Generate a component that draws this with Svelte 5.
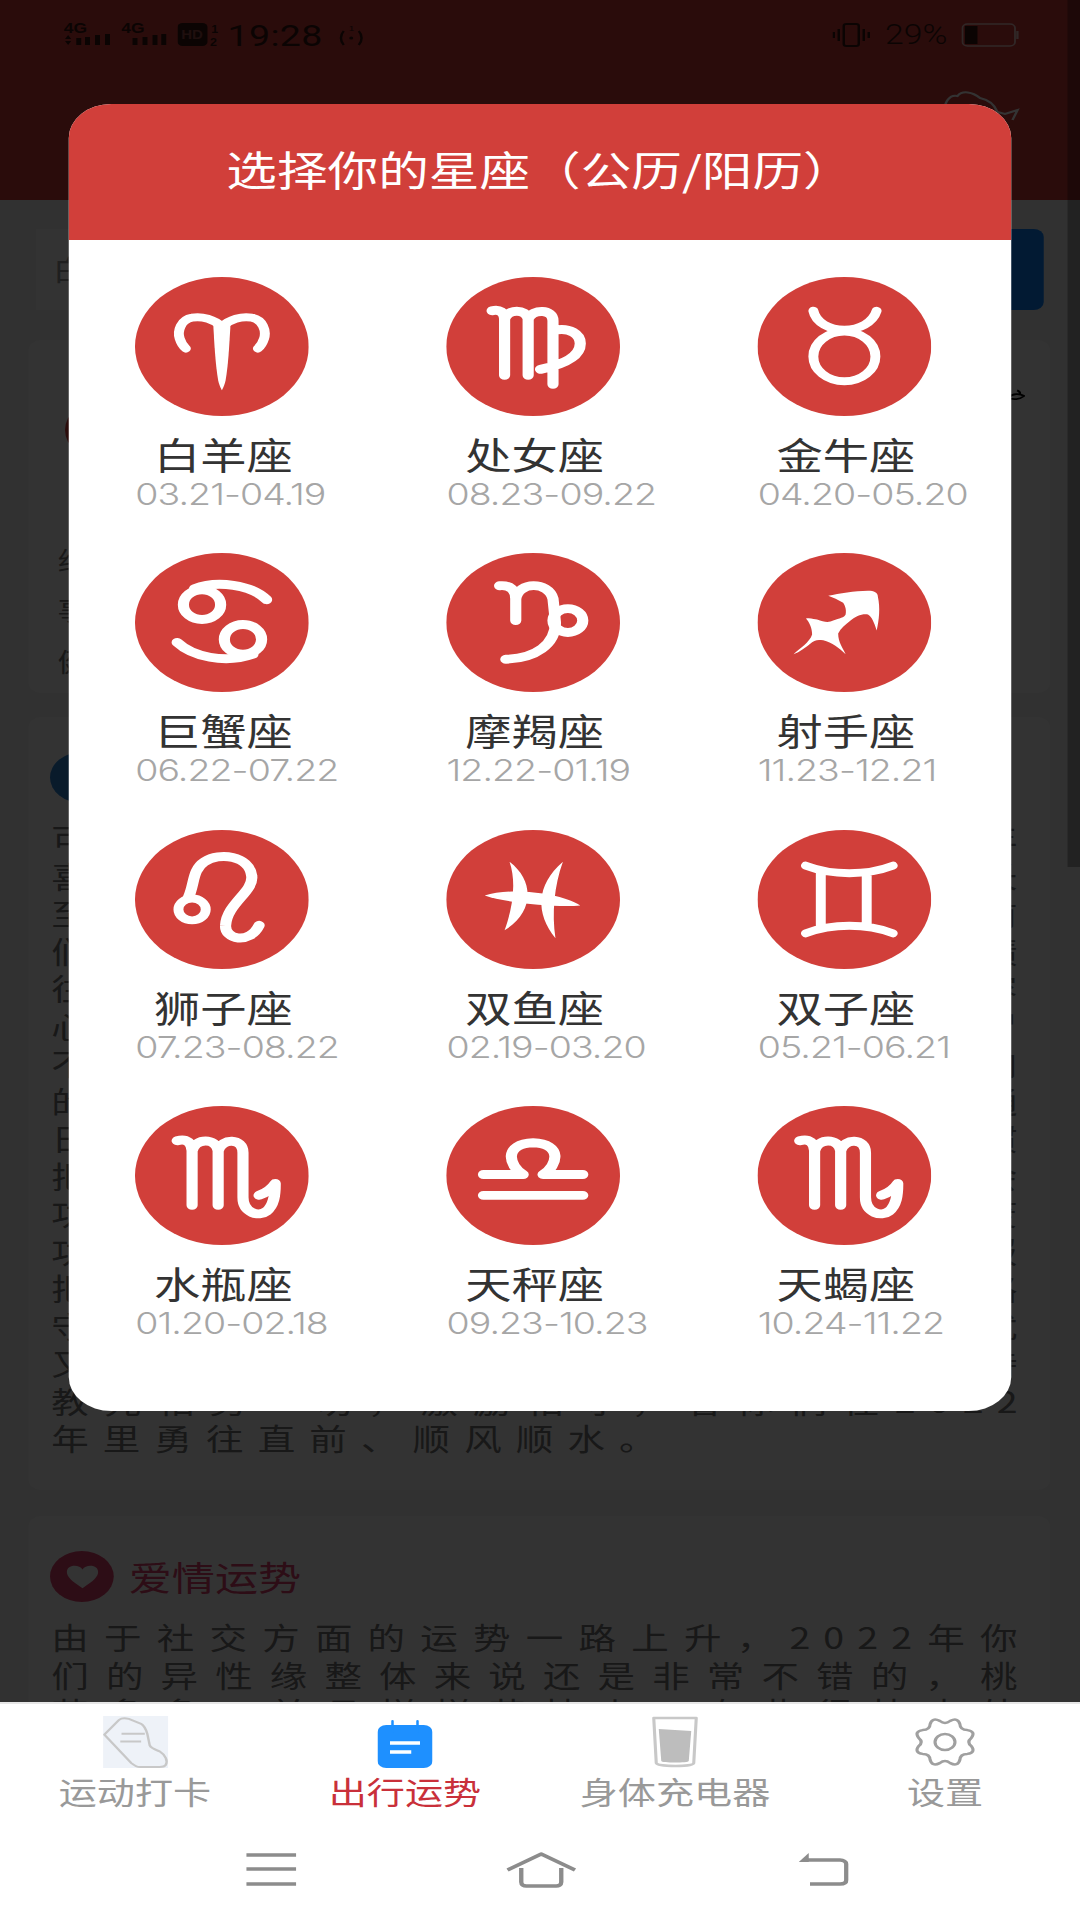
<script>
  const signs = [
    { name: '白羊座', date: '03.21-04.19', key: 'aries' },
    { name: '处女座', date: '08.23-09.22', key: 'virgo' },
    { name: '金牛座', date: '04.20-05.20', key: 'taurus' },
    { name: '巨蟹座', date: '06.22-07.22', key: 'cancer' },
    { name: '摩羯座', date: '12.22-01.19', key: 'capricorn' },
    { name: '射手座', date: '11.23-12.21', key: 'sagittarius' },
    { name: '狮子座', date: '07.23-08.22', key: 'leo' },
    { name: '双鱼座', date: '02.19-03.20', key: 'pisces' },
    { name: '双子座', date: '05.21-06.21', key: 'gemini' },
    { name: '水瓶座', date: '01.20-02.18', key: 'scorpio' },
    { name: '天秤座', date: '09.23-10.23', key: 'libra' },
    { name: '天蝎座', date: '10.24-11.22', key: 'scorpio' }
  ];

  const fortune = [
    '可以说这一年对白羊座是充满希望的一年',
    '喜事连连，各方面都会有不错的收获成长',
    '至于事业方面，也会有新的机会出现眼前',
    '们只要把握时机，就能获得理想中的成绩',
    '往后的日子也会因此变得更加顺利和从容',
    '心态方面需要多加调整，不要过于急躁冒',
    '不妨放慢脚步，认真思考未来的发展方向',
    '的想法也要及时与身边的朋友和家人沟通',
    '日常生活里保持良好的作息和运动的习惯',
    '把握好每一次学习与提升自己的宝贵机会',
    '功课和工作都要踏实认真，切勿半途而废',
    '功到自然成，付出的努力终究会得到回报',
    '把精力放在真正重要的事情上，少走弯路',
    '守住自己的初心，不被外界的声音所干扰',
    '又能在人际交往中获得贵人的帮助和支持',
    '教先相势一切，激励相守，着你们在2022'
  ];

  function gearPath() {
    const cx = 25, cy = 26, n = 8, step = Math.PI / n;
    const pt = (a, r) => (cx + Math.cos(a) * r).toFixed(1) + ' ' + (cy + Math.sin(a) * r).toFixed(1);
    let d = '';
    for (let i = 0; i < n; i++) {
      const a = (i / n) * Math.PI * 2 + step;
      if (i === 0) d += 'M' + pt(a - step / 2, 21.5) + ' ';
      d += 'Q' + pt(a, 27) + ' ' + pt(a + step / 2, 21.5) + ' ';
      d += 'Q' + pt(a + step, 17) + ' ' + pt(a + step * 1.5, 21.5) + ' ';
    }
    return d + 'Z';
  }
  const gear = gearPath();
</script>

<div class="stage">
  <div class="page">
    <header class="top">
      <div class="status">
        <svg class="sig" viewBox="0 -4 38 32" aria-hidden="true">
          <text x="0" y="10" class="sig-t">4G</text>
          <path d="M1 16L3.5 12L6 16ZM1 18L3.5 22L6 18Z" />
          <rect x="10" y="15" width="4" height="7" /><rect x="17" y="14" width="4" height="8" /><rect x="25" y="12" width="4" height="10" /><rect x="33" y="11" width="4" height="11" />
        </svg>
        <svg class="sig sig2" viewBox="0 -4 38 32" aria-hidden="true">
          <text x="0" y="10" class="sig-t">4G</text>
          <rect x="9" y="15" width="4" height="7" /><rect x="17" y="14" width="4" height="8" /><rect x="25" y="12" width="4" height="10" /><rect x="32" y="11" width="4" height="11" />
        </svg>
        <svg class="hd" viewBox="0 0 33 24" aria-hidden="true">
          <rect x="0" y="0" width="24" height="23" rx="4" />
          <text x="3" y="16" class="hd-t">HD</text>
          <text x="27" y="10" class="hd-n">1</text>
          <text x="26" y="23" class="hd-n">2</text>
        </svg>
        <span class="time">19:28</span>
        <svg class="wifi" viewBox="0 0 24 24" aria-hidden="true">
          <circle cx="12" cy="15" r="1.6" />
          <text x="10" y="8" class="wifi-n">1</text>
          <path d="M6 8C3 12 3 18 6 22M18 8C21 12 21 18 18 22" />
        </svg>
        <span class="grow"></span>
        <svg class="vib" viewBox="0 0 30 24" aria-hidden="true">
          <rect x="9" y="1" width="12" height="22" rx="2" />
          <path d="M5 6v12M25 6v12M1 9v6M29 9v6" />
        </svg>
        <span class="pct">29%</span>
        <svg class="batt" viewBox="0 0 46 24" aria-hidden="true">
          <rect class="b-o" x="1" y="1" width="42" height="22" rx="4" />
          <rect class="b-f" x="3" y="3" width="10" height="18" />
          <rect class="b-o2" x="44" y="8" width="2" height="8" />
        </svg>
      </div>
      <svg class="pig" viewBox="0 0 62 40" aria-hidden="true">
        <path d="M2 22C1 12 6 4 12 6C16 0 24 2 30 8C38 10 42 16 44 22L50 24L60 20L56 30" />
      </svg>
    </header>

    <div class="search">
      <div class="search-field">白羊座</div>
      <div class="search-btn"></div>
    </div>

    <section class="card c1">
      <div class="c1-head">
        <span class="c1-dot"></span>
        <svg class="c1-link" viewBox="0 0 20 18" aria-hidden="true"><path d="M1 11C6 5 14 5 19 9C14 14 6 15 1 11ZM14 7C15 4 13 2 11 1" /></svg>
      </div>
      <p class="c1-l a">综合指数：五颗星</p>
      <p class="c1-l b">事业指数：四颗星</p>
      <p class="c1-l c">健康指数：三颗星</p>
    </section>

    <section class="card c2">
      <div class="ct"><span class="ci blue"></span><span class="ctt blue-t">整体运势</span></div>
      {#each fortune as line}
        <p class="line">{line}</p>
      {/each}
      <p class="line last">年里勇往直前、顺风顺水。</p>
    </section>

    <section class="card c3">
      <div class="ct">
        <span class="ci pink">
          <svg viewBox="0 0 24 24" aria-hidden="true"><path d="M12 21C5 15 2 12 2 8C2 5 4 3 7 3C9 3 11 4 12 6C13 4 15 3 17 3C20 3 22 5 22 8C22 12 19 15 12 21Z" /></svg>
        </span>
        <span class="ctt pink-t">爱情运势</span>
      </div>
      <p class="line">由于社交方面的运势一路上升，2022年你</p>
      <p class="line">们的异性缘整体来说还是非常不错的，桃</p>
      <p class="line">花多多，并且样样花枝上，有些很快内外</p>
    </section>

    <div class="scrollbar"></div>
    <div class="overlay"></div>

    <div class="modal">
      <div class="modal-head">选择你的星座（公历/阳历）</div>
      <div class="grid">
        {#each signs as s}
          <div class="sign">
            <svg class="zod" viewBox="0 0 140 140" aria-hidden="true">
              <circle class="disc" cx="70" cy="70" r="70" />
              {#if s.key === 'aries'}
                <path class="g w8" d="M70 50C64 43 54 39 46 41C37 43 34 54 36 62C37 66 39 70 41 72" />
                <path class="g w8" d="M70 50C76 43 86 39 94 41C103 43 106 54 104 62C103 66 101 70 99 72" />
                <path class="f" d="M63 46L77 46C76 70 75 90 73 104C72 110 70 114 70 114C70 114 68 110 67 104C65 90 64 70 63 46Z" />
              {:else if s.key === 'virgo'}
                <path class="g" d="M37 34C43 32 47 36 47 42L47 99M47 42C50 32 64 32 66 42L66 99M66 42C70 32 86 32 86 44L86 108M86 54C100 50 108 58 108 67C108 80 95 88 76 93" />
              {:else if s.key === 'taurus'}
                <circle class="g w8" cx="70" cy="80" r="25" />
                <path class="g w8" d="M45 34C47 46 58 53 70 53C82 53 93 46 96 34" />
              {:else if s.key === 'cancer'}
                <circle class="g" cx="54" cy="52" r="15" />
                <circle class="g" cx="87" cy="87" r="15" />
                <path class="g" d="M48 36C66 27 94 32 106 47" />
                <path class="g" d="M34 90C46 104 72 112 95 102" />
              {:else if s.key === 'capricorn'}
                <path class="g" d="M43 33C52 32 56 38 56 46L56 68M56 46C58 29 82 28 86 46L88 70C88 92 72 106 48 107" />
                <circle class="g" cx="98" cy="68" r="12" />
              {:else if s.key === 'sagittarius'}
                <path class="f" d="M57 43C66 41 78 38 89 38C94 38 97 40 97 44C99 55 98 68 96 78C94 70 92 64 89 62C84 61 79 64 75 68C71 72 67 76 65 81C65 90 69 96 71 102C66 96 60 90 53 88C48 87 46 88 44 90C39 95 34 100 29 102C34 96 42 90 44 82C44 76 42 70 39 66C43 65 46 67 48 67C54 70 58 70 61 68C66 66 70 65 71 62C72 56 70 52 69 50C65 47 61 45 57 43Z" />
              {:else if s.key === 'leo'}
                <circle class="g w8" cx="46" cy="80" r="11" />
                <path class="g" d="M43 68C48 55 46 40 56 32C68 22 92 26 94 46C96 62 74 74 73 96C72 110 92 116 100 96" />
              {:else if s.key === 'pisces'}
                <path class="f" d="M51 32C72 52 70 84 47 101C53 80 57 54 51 32Z" />
                <path class="f" d="M94 32C72 56 72 84 88 109C85 84 87 56 94 32Z" />
                <path class="f" d="M31 66C50 58 90 62 108 76C90 78 50 74 31 66Z" />
              {:else if s.key === 'gemini'}
                <path class="g w8" d="M39 36C60 46 88 46 109 36M39 104C60 94 88 94 109 104M51 43L51 97M88 43L88 97" />
              {:else if s.key === 'scorpio'}
                <path class="g" d="M34 35C42 32 46 38 46 45L46 100M46 45C49 32 65 32 67 45L67 100M67 45C70 32 87 32 87 47L87 92C87 108 100 112 106 106C112 100 113 90 113 78C110 84 104 88 100 90" />
              {:else if s.key === 'libra'}
                <path class="g" d="M30 69L62 69C50 60 46 38 70 37C94 38 90 60 78 69L110 69M30 90L110 90" />
              {/if}
            </svg>
            <div class="sign-name">{s.name}</div>
            <div class="sign-date">{s.date}</div>
          </div>
        {/each}
      </div>
    </div>
  </div>

  <nav class="tabs">
    <div class="tab">
      <svg class="ic shoe" viewBox="0 0 53 53" aria-hidden="true">
        <rect class="shoe-bg" width="53" height="53" />
        <path class="shoe-l" d="M1 19L13 4C15 2 18 2 21 3L31 8C34 10 35 14 36 18L38 30C39 33 42 34 46 36C51 40 53 46 51 50C50 52 48 52 46 52L30 52C27 52 25 50 23 48Z" />
        <path class="shoe-l" d="M15 18L34 18M14 26L31 26" />
      </svg>
      <span class="lbl">运动打卡</span>
    </div>
    <div class="tab on">
      <svg class="ic cal" viewBox="0 0 44 52" aria-hidden="true">
        <rect class="cal-b" x="0" y="9" width="44" height="43" rx="7" />
        <path class="cal-r" d="M12 5L12 16M32 5L32 16" />
        <path class="cal-l" d="M10 27L34 27M10 36L27 36" />
      </svg>
      <span class="lbl">出行运势</span>
    </div>
    <div class="tab">
      <svg class="ic cup" viewBox="0 0 38 52" aria-hidden="true">
        <path class="cup-f" d="M6 13L32 15L30 45C30 47 8 47 8 45Z" />
        <path class="cup-o" d="M2 2L36 2L34 47C34 51 5 51 4 47Z" />
      </svg>
      <span class="lbl">身体充电器</span>
    </div>
    <div class="tab">
      <svg class="ic gear" viewBox="0 0 50 52" aria-hidden="true">
        <path class="gear-p" d={gear} />
        <circle class="gear-p" cx="25" cy="26" r="8" />
      </svg>
      <span class="lbl">设置</span>
    </div>
  </nav>

  <div class="nav">
    <svg class="n-menu" viewBox="0 0 40 34" aria-hidden="true"><path d="M0 3L40 3M0 17L40 17M0 32L40 32" /></svg>
    <svg class="n-home" viewBox="0 0 56 36" aria-hidden="true"><path d="M1 18L28 2L55 18M12 16L12 30C12 33 14 34 16 34L40 34C42 34 44 33 44 30L44 16" /></svg>
    <svg class="n-back" viewBox="0 0 40 36" aria-hidden="true">
      <path d="M6 8L33 8C36 8 38 10 38 12L38 28C38 31 36 32 33 32L9 32" />
      <path class="n-arrow" d="M0 10L8 1L8 10Z" />
    </svg>
  </div>
</div>

<style>
  :global(body) {
    margin: 0;
    background: #fff;
  }
  :global(html), :global(body) {
    overflow: hidden;
  }
  .stage {
    width: 864px;
    height: 1920px;
    display: flex;
    flex-direction: column;
    transform: scaleX(1.25);
    transform-origin: 0 0;
    font-family: "Noto Sans CJK SC", "Liberation Sans", sans-serif;
    overflow: hidden;
    background: #fff;
  }
  .page {
    position: relative;
    height: 1702px;
    flex: none;
    overflow: hidden;
    background: #f5f5f5;
  }
  .overlay {
    position: absolute;
    inset: 0;
    background: rgba(0, 0, 0, 0.8);
  }
  .scrollbar {
    position: absolute;
    top: 0;
    right: 0;
    width: 10px;
    height: 867px;
    background: rgba(0, 0, 0, 0.3);
  }
  .top {
    height: 200px;
    background: #d13f3a;
    position: relative;
  }
  .status {
    height: 70px;
    padding: 0 49px 0 51px;
    display: flex;
    align-items: center;
    color: #3a1512;
  }
  .status svg { fill: #3a1512; flex: none; }
  .sig { width: 38px; height: 32px; }
  .sig2 { margin-left: 8px; }
  .sig-t { font: 700 14px "Liberation Sans", sans-serif; }
  .hd { width: 33px; height: 24px; margin-left: 7px; }
  .hd-t { font: 700 12px "Liberation Sans", sans-serif; fill: #9a4a46; }
  .hd-n { font: 700 10px "Liberation Sans", sans-serif; }
  .time {
    font: 400 30px Roboto, sans-serif;
    margin-left: 7px;
    letter-spacing: 0.3px;
  }
  .wifi { width: 24px; height: 24px; margin-left: 11px; }
  .wifi-n { font: 400 8px "Liberation Sans", sans-serif; }
  .wifi path, .vib path { fill: none; stroke: #3a1512; stroke-width: 2; }
  .vib rect { fill: none; stroke: #3a1512; stroke-width: 2; }
  .grow { flex: 1; }
  .vib { width: 30px; height: 24px; }
  .pct {
    font: 300 27px Roboto, sans-serif;
    margin-left: 12px;
  }
  .batt { width: 46px; height: 24px; margin-left: 11px; }
  .b-o { fill: none !important; stroke: #fff; stroke-width: 1.5; opacity: 0.7; }
  .b-o2 { fill: #fff; opacity: 0.7; }
  .pig {
    position: absolute;
    left: 754px;
    top: 90px;
    width: 62px;
    height: 40px;
    fill: none;
    stroke: #fff;
    stroke-width: 2;
  }
  .search {
    margin: 29px 29px 0 29px;
    height: 81px;
    display: flex;
  }
  .search-field {
    flex: 1;
    background: #fff;
    padding: 0 13px;
    font-size: 28px;
    line-height: 81px;
    color: #999;
  }
  .search-btn {
    width: 120px;
    border-radius: 0 8px 8px 0;
    background: #0a84ff;
  }
  .card {
    background: #fff;
    margin: 0 24px 0 23px;
    border-radius: 10px;
    padding: 0 18px;
    overflow: hidden;
  }
  .c1 { margin-top: 30px; height: 353px; }
  .c2 { margin-top: 24px; height: 773px; }
  .c3 { margin-top: 26px; height: 300px; }
  .c1-head {
    height: 125px;
    padding-top: 60px;
    box-sizing: border-box;
    display: flex;
    justify-content: space-between;
  }
  .c1-dot {
    width: 60px;
    height: 60px;
    margin-left: 11px;
    border-radius: 50%;
    background: #d13f3a;
  }
  .c1-link {
    width: 14px;
    height: 18px;
    margin-right: 2px;
    margin-top: -13px;
    fill: none;
    stroke: #000;
    stroke-width: 2.5;
  }
  .c1-l {
    margin: 0;
    padding-left: 5px;
    font-size: 26px;
    line-height: 36px;
    color: #777;
  }
  .a { margin-top: 77px; }
  .b { margin-top: 13px; }
  .c { margin-top: 16px; }
  .ct {
    display: flex;
    align-items: center;
    gap: 12px;
    padding-top: 35px;
    height: 51px;
    margin-bottom: 16px;
    margin-left: -1px;
    box-sizing: content-box;
  }
  .ci {
    width: 51px;
    height: 51px;
    border-radius: 50%;
    display: flex;
    align-items: center;
    justify-content: center;
  }
  .ci svg { width: 30px; height: 30px; fill: #fff; }
  .blue { background: #2f86d6; }
  .pink { background: #e0436f; }
  .ctt { font-size: 34.5px; line-height: 51px; }
  .blue-t { color: #2f86d6; }
  .pink-t { color: #e0436f; }
  .line {
    margin: 0;
    width: 783.5px;
    font-size: 30px;
    line-height: 37.5px;
    letter-spacing: 10.5px;
    color: #777;
    text-align: justify;
    text-align-last: justify;
  }
  .last {
    text-align-last: left;
    letter-spacing: 11.3px;
  }
  .modal {
    position: absolute;
    left: 55.2px;
    top: 104px;
    width: 753.6px;
    height: 1307px;
    background: #fff;
    border-radius: 34px;
    overflow: hidden;
  }
  .modal-head {
    height: 136px;
    padding-bottom: 8px;
    box-sizing: border-box;
    background: #d13f3a;
    color: #fff;
    font-size: 40.5px;
    font-weight: 400;
    display: flex;
    align-items: center;
    justify-content: center;
  }
  .grid {
    display: grid;
    grid-template-columns: repeat(3, 139px);
    column-gap: 110px;
    row-gap: 42.3px;
    padding: 37px 0 0 53px;
  }
  .zod {
    display: block;
    width: 139px;
    height: 139px;
  }
  .disc { fill: #d13f3a; }
  .g {
    fill: none;
    stroke: #fff;
    stroke-width: 9;
    stroke-linecap: round;
    stroke-linejoin: round;
  }
  .w8 { stroke-width: 8; }
  .f { fill: #fff; }
  .sign-name {
    margin-top: 20px;
    width: 141px;
    text-align: center;
    font-size: 37px;
    line-height: 36px;
    color: #333;
    white-space: nowrap;
  }
  .sign-date {
    margin-top: 5px;
    height: 34px;
    font-family: Inter, sans-serif;
    font-weight: 300;
    font-size: 30px;
    line-height: 34px;
    letter-spacing: -0.75px;
    color: #a6a6a6;
    white-space: nowrap;
  }
  .tabs {
    display: grid;
    grid-template-columns: repeat(4, 1fr);
    border-top: 2px solid #e6e6e6;
    background: #fff;
    height: 148px;
    box-sizing: border-box;
  }
  .tab {
    display: flex;
    flex-direction: column;
    align-items: center;
    padding-top: 12px;
  }
  .ic {
    display: block;
    height: 52px;
    width: 53px;
    flex: none;
  }
  .lbl {
    margin-top: 5px;
    font-size: 30.5px;
    line-height: 36px;
    color: #999;
    white-space: nowrap;
  }
  .on .lbl { color: #c9303a; }
  .shoe-bg { fill: #eef2f8; }
  .shoe-l { fill: none; stroke: #c8c8c8; stroke-width: 2; stroke-linejoin: round; }
  .cal { width: 44px; }
  .cal-b { fill: #1e90ff; }
  .cal-r { stroke: #1e90ff; stroke-width: 2; stroke-linecap: round; fill: none; }
  .cal-l { stroke: #fff; stroke-width: 3.5; fill: none; }
  .cup { width: 38px; }
  .cup-f { fill: #bdbdbd; }
  .cup-o { fill: none; stroke: #c8c8c8; stroke-width: 2.5; stroke-linejoin: round; }
  .gear { width: 50px; height: 52px; }
  .gear-p { fill: none; stroke: #a0a0a0; stroke-width: 2.5; stroke-linejoin: round; }
  .nav {
    flex: 1;
    display: flex;
    align-items: flex-start;
    padding: 2px 0 0 197px;
  }
  .nav svg { flex: none; fill: none; stroke: #8c8c8c; stroke-width: 3.5; stroke-linejoin: round; }
  .n-menu { width: 40px; height: 34px; }
  .n-home { width: 56px; height: 36px; margin-left: 168px; }
  .n-back { width: 40px; height: 36px; margin-left: 178px; }
  .n-arrow { fill: #8c8c8c; stroke: none !important; }
</style>
